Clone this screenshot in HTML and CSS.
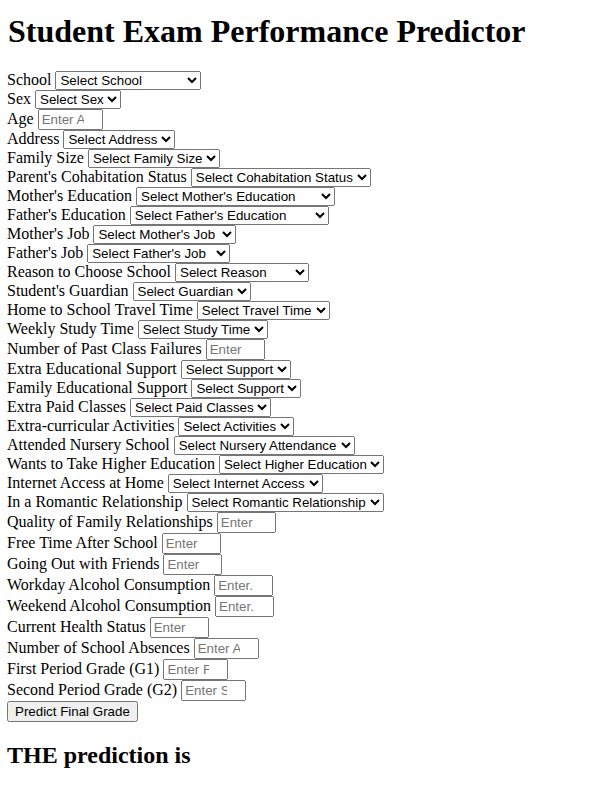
FILE: index.html
```html
<!DOCTYPE html>
<html lang="en">
<head>
<meta charset="utf-8">
<title>Student Exam Performance Predictor</title>
<link rel="stylesheet" href="styles.css">
</head>
<body>
<h1 class="title">Student Exam Performance Predictor</h1>
<form class="form">
<label>School</label> <select class="w-school"><option>Select School</option><option>Gabriel Pereira</option><option>Mousinho da Silveira</option></select><br>
<label>Sex</label> <select><option>Select Sex</option><option>Female</option><option>Male</option></select><br>
<label>Age</label> <input class="num-2" type="number" min="15" max="22" placeholder="Enter Age"><br>
<label>Address</label> <select><option>Select Address</option><option>Urban</option><option>Rural</option></select><br>
<label>Family Size</label> <select><option>Select Family Size</option><option>Less or equal to 3</option><option>Greater than 3</option></select><br>
<label>Parent's Cohabitation Status</label> <select><option>Select Cohabitation Status</option><option>Living Together</option><option>Apart</option></select><br>
<label>Mother's Education</label> <select class="w-edu"><option>Select Mother's Education</option><option>None</option><option>Primary Education</option></select><br>
<label>Father's Education</label> <select class="w-edu"><option>Select Father's Education</option><option>None</option><option>Primary Education</option></select><br>
<label>Mother's Job</label> <select class="w-job"><option>Select Mother's Job</option><option>Teacher</option><option>Health</option></select><br>
<label>Father's Job</label> <select class="w-job"><option>Select Father's Job</option><option>Teacher</option><option>Health</option></select><br>
<label>Reason to Choose School</label> <select class="w-reason"><option>Select Reason</option><option>Home</option><option>Reputation</option></select><br>
<label>Student's Guardian</label> <select><option>Select Guardian</option><option>Mother</option><option>Father</option></select><br>
<label>Home to School Travel Time</label> <select><option>Select Travel Time</option><option>&lt;15 min</option></select><br>
<label>Weekly Study Time</label> <select><option>Select Study Time</option><option>&lt;2 hours</option></select><br>
<label>Number of Past Class Failures</label> <input class="num-1" type="number" min="0" max="4" placeholder="Enter Failures"><br>
<label>Extra Educational Support</label> <select><option>Select Support</option><option>Yes</option><option>No</option></select><br>
<label>Family Educational Support</label> <select><option>Select Support</option><option>Yes</option><option>No</option></select><br>
<label>Extra Paid Classes</label> <select><option>Select Paid Classes</option><option>Yes</option><option>No</option></select><br>
<label>Extra-curricular Activities</label> <select><option>Select Activities</option><option>Yes</option><option>No</option></select><br>
<label>Attended Nursery School</label> <select class="w-nursery"><option>Select Nursery Attendance</option><option>Yes</option><option>No</option></select><br>
<label>Wants to Take Higher Education</label> <select><option>Select Higher Education</option><option>Yes</option><option>No</option></select><br>
<label>Internet Access at Home</label> <select><option>Select Internet Access</option><option>Yes</option><option>No</option></select><br>
<label>In a Romantic Relationship</label> <select><option>Select Romantic Relationship</option><option>Yes</option><option>No</option></select><br>
<label>Quality of Family Relationships</label> <input class="num-1" type="number" min="1" max="5" placeholder="Enter Family Quality"><br>
<label>Free Time After School</label> <input class="num-1" type="number" min="1" max="5" placeholder="Enter Free Time"><br>
<label>Going Out with Friends</label> <input class="num-1" type="number" min="1" max="5" placeholder="Enter Going Out"><br>
<label>Workday Alcohol Consumption</label> <input class="num-1" type="number" min="1" max="5" placeholder="Enter..."><br>
<label>Weekend Alcohol Consumption</label> <input class="num-1" type="number" min="1" max="5" placeholder="Enter..."><br>
<label>Current Health Status</label> <input class="num-1" type="number" min="1" max="5" placeholder="Enter Health"><br>
<label>Number of School Absences</label> <input class="num-2" type="number" min="0" max="93" placeholder="Enter Absences"><br>
<label>First Period Grade (G1)</label> <input class="num-2" type="number" min="0" max="20" placeholder="Enter First Grade"><br>
<label>Second Period Grade (G2)</label> <input class="num-2" type="number" min="0" max="20" placeholder="Enter Second Grade"><br>
<button type="button">Predict Final Grade</button>
</form>
<h2 class="result">THE prediction is</h2>
</body>
</html>
```
FILE: styles.css
```css
body {
  margin: 0;
  padding: 8px 8px 8px 7px;
  font-family: "Liberation Serif", "Times New Roman", serif;
  font-size: 16px;
  color: #000;
  background: #fff;
}
.title {
  margin-top: 5px;
  margin-left: 1px;
}
select, input, button {
  font-family: "Liberation Sans", Arial, sans-serif;
  font-size: 13.333px;
}
input {
  box-sizing: border-box;
}
.num-1 { width: 59px; }
.num-2 { width: 65px; }
.w-school { width: 146px; }
.w-edu { width: 199px; }
.w-job { width: 143px; }
.w-reason { width: 134px; }
.w-nursery { width: 181px; }
```
